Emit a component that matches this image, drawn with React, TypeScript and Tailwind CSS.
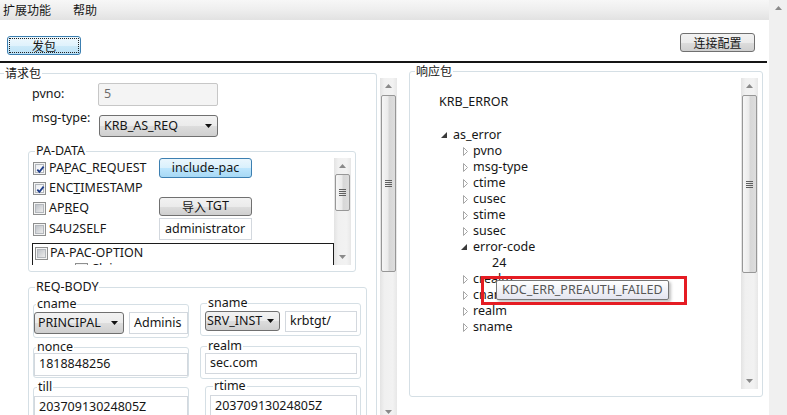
import React from "react";

const LAT = "font-['Noto_Sans','Noto_Sans_CJK_SC',sans-serif]";
const CJK = "font-['Noto_Sans_CJK_SC',sans-serif]";

function Arrow({ up }: { up?: boolean }) {
  return (
    <div className="flex h-[16px] w-full shrink-0 items-center justify-center">
      <svg width="7" height="4" viewBox="0 0 7 4">
        <polygon points={up ? "0,4 3.5,0 7,4" : "0,0 7,0 3.5,4"} fill="#8a8a8a" />
      </svg>
    </div>
  );
}

function Grip() {
  return (
    <div className="flex flex-col gap-[1px]">
      <div className="h-[1px] w-[7px] bg-[#5f5f5f]" />
      <div className="h-[1px] w-[7px] bg-[#5f5f5f]" />
      <div className="h-[1px] w-[7px] bg-[#5f5f5f]" />
      <div className="h-[1px] w-[7px] bg-[#5f5f5f]" />
    </div>
  );
}

function VScroll({ box, thumb }: { box: string; thumb: string }) {
  return (
    <div
      className={`flex w-[17px] shrink-0 flex-col bg-[linear-gradient(to_right,#e3e3e3,#f0f0f0_25%,#f2f2f2_75%,#e7e7e7)] ${box}`}
    >
      <Arrow up />
      <div
        className={`mx-[1px] flex shrink-0 items-center justify-center rounded-[2px] border border-[#979797] bg-[linear-gradient(to_right,#f6f6f6,#ebebeb_45%,#d7d7d7_55%,#dddddd)] ${thumb}`}
      >
        <Grip />
      </div>
      <div className="flex-1" />
      <Arrow />
    </div>
  );
}

function Check({ on }: { on?: boolean }) {
  return (
    <span className="relative flex h-[13px] w-[13px] shrink-0 items-center justify-center border border-[#8e8f8f] bg-[#f4f4f4]">
      <span
        className={`h-[9px] w-[9px] border border-[#b4b8bd] ${
          on
            ? "bg-[linear-gradient(135deg,#eceef2,#ffffff)]"
            : "bg-[linear-gradient(135deg,#bfc3c9,#ececec)]"
        }`}
      />
      {on && (
        <svg className="absolute left-[1px] top-[1px]" width="11" height="11" viewBox="0 0 11 11">
          <path d="M2.3 5.6 L4.4 7.9 L8.6 2.6" stroke="#213f8a" strokeWidth="1.8" fill="none" />
        </svg>
      )}
    </span>
  );
}

function Select({ cls, label, pl }: { cls: string; label: string; pl: string }) {
  return (
    <div
      className={`flex shrink-0 items-center rounded-[3px] border border-[#707070] bg-[linear-gradient(to_bottom,#f2f2f2_0%,#ebebeb_50%,#dddddd_51%,#cfcfcf_100%)] pr-[5px] ${pl} ${cls}`}
    >
      <span className="flex-1 overflow-hidden whitespace-nowrap">{label}</span>
      <svg width="7" height="4" viewBox="0 0 7 4" className="ml-[3px] shrink-0">
        <polygon points="0,0 7,0 3.5,4" fill="#111" />
      </svg>
    </div>
  );
}

function Input({ cls, text }: { cls: string; text: string }) {
  return (
    <div
      className={`flex shrink-0 items-center overflow-hidden whitespace-nowrap border border-[#d3d8de] bg-white pl-[4px] ${cls}`}
    >
      {text}
    </div>
  );
}

function Collapsed() {
  return (
    <svg width="5" height="9" viewBox="0 0 5 9">
      <path d="M0.5 0.5 L4.5 4.5 L0.5 8.5 Z" fill="white" stroke="#a6a6a6" strokeWidth="1" />
    </svg>
  );
}

function Expanded() {
  return (
    <svg width="6" height="6" viewBox="0 0 6 6">
      <polygon points="6,0 6,6 0,6" fill="#3a3a3a" />
    </svg>
  );
}

function Child({ label }: { label: string }) {
  return (
    <div className="flex h-[16px] items-center pl-[53px]">
      <span className="flex w-[10px] items-center">
        <Collapsed />
      </span>
      <span>{label}</span>
    </div>
  );
}

export default function App() {
  return (
    <div
      className={`relative flex h-[415px] w-[787px] overflow-hidden bg-white text-[12.5px] text-[#161616] ${LAT}`}
    >
      <div className="flex w-[769px] shrink-0 flex-col">
        {/* menu bar */}
        <div
          className={`flex h-[20px] shrink-0 items-center bg-[linear-gradient(to_bottom,#f7f7f7,#eeeeee_50%,#e2e2e2)] pb-[1px] pl-[3px] text-[12px] ${CJK}`}
        >
          <span>扩展功能</span>
          <span className="ml-[22px]">帮助</span>
        </div>
        {/* toolbar */}
        <div className="flex h-[41px] shrink-0 items-start justify-between">
          <div className="ml-[7px] mt-[16px] flex h-[19px] w-[74px] items-center justify-center rounded-[3px] border border-[#3c7fb1] bg-[linear-gradient(to_bottom,#eef8fd_0%,#e0f2fc_50%,#cdeaf9_51%,#bde2f6_100%)] p-[1px]">
            <div className={`flex h-full w-full items-center justify-center border border-dotted border-[#222] text-[12px] ${CJK}`}>
              发包
            </div>
          </div>
          <div
            className={`mr-[14px] mt-[13px] flex h-[19px] w-[75px] items-center justify-center rounded-[3px] border border-[#707070] bg-[linear-gradient(to_bottom,#f2f2f2_0%,#ebebeb_50%,#dddddd_51%,#cfcfcf_100%)] text-[12px] ${CJK}`}
          >
            连接配置
          </div>
        </div>
        <div className="h-[2px] w-[767px] shrink-0 bg-[#151515]" />
        {/* content */}
        <div className="flex h-[352px] shrink-0 items-start overflow-hidden">
          {/* left group */}
          <fieldset className="mt-[3px] h-[400px] w-[377px] shrink-0 rounded-r-[3px] border border-l-0 border-[#d5dfe5]">
            <legend className={`ml-[4px] px-[1px] text-[12px] leading-[14px] ${CJK}`}>请求包</legend>
            <div className="mt-[3px] flex items-center">
              <span className="w-[98px] pl-[32px]">pvno:</span>
              <div className="flex h-[23px] w-[120px] items-center rounded-[2px] border border-[#c7c7c7] bg-[#f4f4f4] pl-[5px] text-[#6d6d6d]">
                5
              </div>
            </div>
            <div className="mt-[9px] flex items-start">
              <span className="-mt-[4px] w-[99px] pl-[32px] leading-[14px]">msg-type:</span>
              <Select cls="h-[22px] w-[119px]" pl="pl-[4px]" label="KRB_AS_REQ" />
            </div>

            {/* PA-DATA */}
            <fieldset className="ml-[28px] mt-[7px] w-[328px] rounded-[3px] border border-[#d5dfe5] pb-[6px]">
              <legend className="ml-[6px] px-[1px] leading-[14px]">PA-DATA</legend>
              <div className="ml-[3px] flex h-[107px]">
                <div className="h-[107px] w-[302px] overflow-hidden">
                  <div className="flex items-start">
                    <div className="flex w-[127px] flex-col">
                      <div className="flex h-[20px] items-center pl-[1px]">
                        <Check on />
                        <span className="ml-[3px]">
                          PA<u>P</u>AC_REQUEST
                        </span>
                      </div>
                      <div className="flex h-[20px] items-center pl-[1px]">
                        <Check on />
                        <span className="ml-[3px]">
                          ENC<u>T</u>IMESTAMP
                        </span>
                      </div>
                      <div className="flex h-[21px] items-center pl-[1px]">
                        <Check />
                        <span className="ml-[3px]">
                          AP<u>R</u>EQ
                        </span>
                      </div>
                      <div className="flex h-[20px] items-center pl-[1px]">
                        <Check />
                        <span className="ml-[3px]">S4U2SELF</span>
                      </div>
                    </div>
                    <div className="flex w-[93px] flex-col">
                      <div className="flex h-[20px] items-center justify-center rounded-[3px] border border-[#3c7fb1] bg-[linear-gradient(to_bottom,#eaf6fd_0%,#d9f0fc_50%,#bee6fd_51%,#a7d9f5_100%)]">
                        include-pac
                      </div>
                      <div className="mt-[19px] flex h-[19px] items-center justify-center rounded-[3px] border border-[#707070] bg-[linear-gradient(to_bottom,#f2f2f2_0%,#ebebeb_50%,#dddddd_51%,#cfcfcf_100%)]">
                        <span className={`text-[12px] ${CJK}`}>导入</span>
                        <span>TGT</span>
                      </div>
                      <Input cls="mt-[2px] h-[22px] w-[93px] pl-[5px]" text="administrator" />
                    </div>
                  </div>
                  <div className="mt-[3px] h-[40px] border border-b-0 border-[#1c1c1c] pl-[2px] pt-[3px]">
                    <div className="flex h-[13px] items-center">
                      <Check />
                      <span className="ml-[2px]">PA-PAC-OPTION</span>
                    </div>
                    <div className="ml-[40px] mt-[3px] flex h-[13px] items-center">
                      <Check />
                      <span className="ml-[3px]">Claims</span>
                    </div>
                  </div>
                </div>
                <VScroll box="h-[107px]" thumb="h-[37px]" />
              </div>
            </fieldset>

            {/* REQ-BODY */}
            <fieldset className="ml-[28px] mt-[8px] h-[160px] w-[339px] rounded-[3px] border border-[#d5dfe5]">
              <legend className="ml-[6px] px-[1px] leading-[14px]">REQ-BODY</legend>
              <div className="ml-[4px] flex items-start">
                <div className="flex w-[156px] flex-col">
                  <fieldset className="mt-[4px] rounded-[3px] border border-[#d5dfe5] pb-[3px]">
                    <legend className="ml-[2px] px-[1px] leading-[12px]">cname</legend>
                    <div className="mt-[2px] flex">
                      <Select cls="h-[22px] w-[90px]" pl="pl-[3px]" label="PRINCIPAL" />
                      <Input cls="ml-[5px] h-[22px] w-[59px]" text="Adminis" />
                    </div>
                  </fieldset>
                  <fieldset className="mt-[3px] rounded-[3px] border border-[#d5dfe5] pb-[1px]">
                    <legend className="ml-[2px] px-[1px] leading-[12px]">nonce</legend>
                    <Input cls="h-[23px] w-[154px]" text="1818848256" />
                  </fieldset>
                  <fieldset className="mt-[3px] h-[40px] rounded-[3px] border border-[#d5dfe5]">
                    <legend className="ml-[3px] px-[1px] leading-[12px]">till</legend>
                    <Input cls="mt-[3px] h-[22px] w-[154px]" text="20370913024805Z" />
                  </fieldset>
                </div>
                <div className="ml-[11px] flex w-[161px] flex-col">
                  <fieldset className="mt-[3px] rounded-[3px] border border-[#d5dfe5] pb-[3px]">
                    <legend className="ml-[6px] px-[1px] leading-[12px]">sname</legend>
                    <div className="mt-[2px] flex items-start">
                      <Select cls="ml-[4px] h-[20px] w-[75px]" pl="pl-[1px]" label="SRV_INST" />
                      <Input cls="ml-[5px] h-[21px] w-[72px]" text="krbtgt/" />
                    </div>
                  </fieldset>
                  <fieldset className="mt-[4px] rounded-[3px] border border-[#d5dfe5] pb-[4px]">
                    <legend className="ml-[6px] px-[1px] leading-[12px]">realm</legend>
                    <Input cls="ml-[4px] mt-[1px] h-[21px] w-[152px]" text="sec.com" />
                  </fieldset>
                  <fieldset className="ml-[5px] mt-[1px] h-[40px] w-[156px] rounded-[3px] border border-[#d5dfe5]">
                    <legend className="ml-[7px] px-[1px] leading-[12px]">rtime</legend>
                    <Input cls="ml-[4px] mt-[3px] h-[22px] w-[147px]" text="20370913024805Z" />
                  </fieldset>
                </div>
              </div>
            </fieldset>
          </fieldset>

          {/* middle scrollbar */}
          <div className="ml-[3px] mt-[15px] flex">
            <VScroll box="h-[342px]" thumb="mt-[1px] h-[177px]" />
          </div>

          {/* right group */}
          <fieldset className="ml-[12px] mt-[1px] w-[354px] shrink-0 rounded-[3px] border border-[#d5dfe5] pb-[7px]">
            <legend className={`ml-[5px] px-[1px] text-[12px] leading-[14px] ${CJK}`}>响应包</legend>
            <div className="flex h-[311px]">
              <div className="flex-1 overflow-hidden pt-[16px]">
                <div className="flex h-[16px] items-center pl-[29px]">KRB_ERROR</div>
                <div className="mt-[17px] flex h-[16px] items-center pl-[31px]">
                  <span className="flex w-[12px] items-center">
                    <Expanded />
                  </span>
                  <span>as_error</span>
                </div>
                <Child label="pvno" />
                <Child label="msg-type" />
                <Child label="ctime" />
                <Child label="cusec" />
                <Child label="stime" />
                <Child label="susec" />
                <div className="flex h-[16px] items-center pl-[51px]">
                  <span className="flex w-[12px] items-center">
                    <Expanded />
                  </span>
                  <span>error-code</span>
                </div>
                <div className="flex h-[16px] items-center pl-[82px]">24</div>
                <Child label="crealm" />
                <Child label="cname" />
                <Child label="realm" />
                <Child label="sname" />
              </div>
              <div className="mr-[4px] flex">
                <VScroll box="h-[311px]" thumb="mt-[1px] h-[178px]" />
              </div>
            </div>
          </fieldset>
        </div>
      </div>

      {/* window scrollbar strip */}
      <div className="flex w-[18px] shrink-0 flex-col bg-[#f0f0f0]">
        <Arrow up />
      </div>

      {/* tooltip */}
      <div className="absolute left-[496px] top-[280px] flex h-[20px] items-center rounded-[2px] border border-[#767676] bg-[linear-gradient(to_bottom,#ffffff,#e4e5f0)] px-[5px] text-[12.5px] text-[#575757] shadow-[2px_2px_3px_rgba(0,0,0,0.25)]">
        KDC_ERR_PREAUTH_FAILED
      </div>
      <div className="absolute left-[481px] top-[276px] h-[29px] w-[206px] border-[3px] border-[#e51c23]" />
    </div>
  );
}
